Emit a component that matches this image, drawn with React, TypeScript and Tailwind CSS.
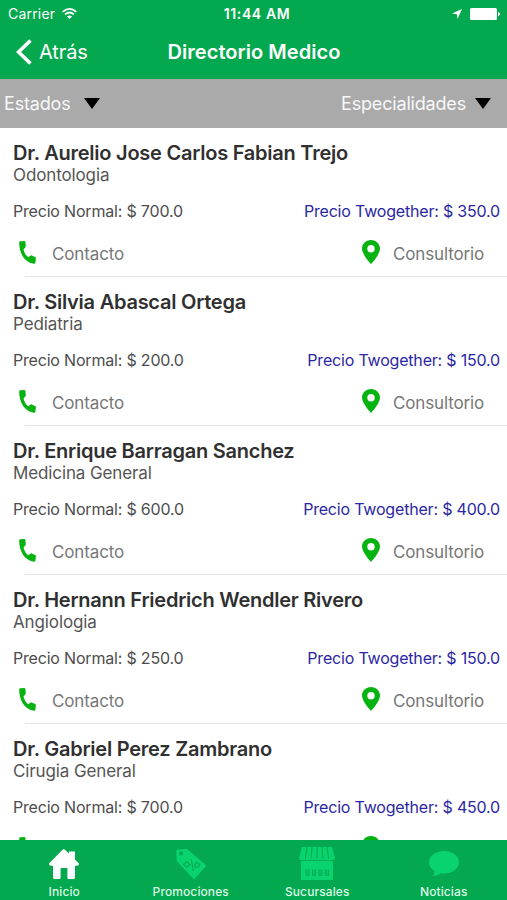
import type { ReactNode } from "react";

type Doctor = {
  name: string;
  specialty: string;
  price: string;
  twogether: string;
};

const doctors: Doctor[] = [
  {
    name: "Dr. Aurelio Jose Carlos Fabian Trejo",
    specialty: "Odontologia",
    price: "700.0",
    twogether: "350.0",
  },
  {
    name: "Dr. Silvia Abascal Ortega",
    specialty: "Pediatria",
    price: "200.0",
    twogether: "150.0",
  },
  {
    name: "Dr. Enrique Barragan Sanchez",
    specialty: "Medicina General",
    price: "600.0",
    twogether: "400.0",
  },
  {
    name: "Dr. Hernann Friedrich Wendler Rivero",
    specialty: "Angiologia",
    price: "250.0",
    twogether: "150.0",
  },
  {
    name: "Dr. Gabriel Perez Zambrano",
    specialty: "Cirugia General",
    price: "700.0",
    twogether: "450.0",
  },
];

function PhoneIcon() {
  return (
    <svg
      className="mt-px w-[17px] h-[23px] shrink-0"
      viewBox="0 0 17 23"
      fill="#06b311"
    >
      <path d="M1.2 0.2 5.3 0Q6.3 0 6.4 1L6.8 5Q6.8 5.8 6.2 6.4L4.5 8.4C5.2 11.6 7 14.6 9.4 16.3L11.3 14.7Q12 14.1 12.8 14.5L16.2 16.1Q17 16.5 16.9 17.3L16.4 21.7Q16.2 22.9 15 22.8C6 21.5 0 13 0.2 1.3Q0.3 0.3 1.2 0.2Z" />
    </svg>
  );
}

function PinIcon() {
  return (
    <svg
      className="w-[18px] h-[24px] shrink-0"
      viewBox="0 0 18 24"
      fill="#06b311"
      fillRule="evenodd"
    >
      <path d="M9 0C4 0 0 3.8 0 8.6C0 14.8 9 24 9 24S18 14.8 18 8.6C18 3.8 14 0 9 0ZM9 5A3.7 3.7 0 1 1 9 12.4A3.7 3.7 0 1 1 9 5Z" />
    </svg>
  );
}

function Caret() {
  return (
    <svg className="w-4 h-[11px] shrink-0" viewBox="0 0 16 11">
      <path d="M0 0H16L8 11Z" />
    </svg>
  );
}

function HomeIcon() {
  return (
    <svg className="w-[30px] h-[30px]" viewBox="0 0 30 30" fill="#fff">
      <path d="M15 0 20 4.6V2.6H26V10.4L30 14.4Q30.2 16.5 28 16.8H26V28.6Q26 30 24.6 30H19.5Q18.4 30 18.4 28.8V19H11.6V28.8Q11.6 30 10.4 30H5.4Q4 30 4 28.6V16.8H2Q-0.2 16.5 0 14.4L13.6 0.7Q14.3 0 15 0Z" />
    </svg>
  );
}

function TagIcon() {
  return (
    <svg className="w-[30px] h-[30px]" viewBox="0 0 30 30">
      <path
        d="M2.2 0.4 10 0Q11.2 0 12 0.7L29.2 15.5Q30.4 16.6 29.4 17.8L19.3 29.2Q18.1 30.5 16.9 29.3L1.3 12.8Q0.6 12 0.6 11L0.3 2.4Q0.3 0.5 2.2 0.4Z"
        fill="#08d36c"
      />
      <circle cx="5" cy="4.5" r="2" fill="#04a84e" />
      <g fill="none" stroke="#04a84e" strokeWidth="1.1">
        <path d="M7.5 15.5 11 12.8 13.8 15.7 10.5 18.3ZM15.3 10.5 17.3 22" />
        <path d="M18.5 16 21 13.2 23.8 15.6 22.3 18 19.3 18.2Z" />
      </g>
    </svg>
  );
}

function StoreIcon() {
  return (
    <svg className="w-9 h-[33px]" viewBox="0 0 36 33">
      <path d="M2 12H34V33H2V12Z" fill="#08d36c" />
      <path d="M3 0H33L36 11Q36 13 34 13H2Q0 13 0 11Z" fill="#08d36c" />
      <path
        d="M8 0 6.4 12M13 0 12 12M18 0V12M23 0 24 12M28 0 29.6 12M2 13.5H34"
        stroke="#04ae53"
        strokeWidth="1.1"
      />
      <path
        d="M7 22.5V28.5H10V22.5M13.5 22.5V28.5H16.5V22.5M20 22.5V28.5H23V22.5M26.5 22.5V28.5H29.5V22.5"
        fill="#06c262"
        stroke="#04ae53"
        strokeWidth="1"
      />
    </svg>
  );
}

function ChatIcon() {
  return (
    <svg className="w-[30px] h-[26px]" viewBox="0 0 30 26" fill="#08d36c">
      <path d="M15 0C6.7 0 0 5 0 11.2C0 15 2.3 18.3 5.8 20.3Q5.5 23 3.6 25C7 25 9.7 24 11.5 22.2Q13.2 22.5 15 22.5C23.3 22.5 30 17.5 30 11.2S23.3 0 15 0Z" />
    </svg>
  );
}

function DoctorRow({ doctor }: { doctor: Doctor }) {
  return (
    <li className="h-[149px] shrink-0 flex flex-col pt-[13px]">
      <h2 className="pl-[13px] text-[20px] leading-6 font-semibold tracking-[-0.24px] text-[#303030]">
        {doctor.name}
      </h2>
      <p className="pl-[13px] text-[17px] leading-5 tracking-[-0.12px] text-[#555]">
        {doctor.specialty}
      </p>
      <div className="mt-4 pl-[13px] pr-[7px] flex justify-between text-[16px] leading-5 tracking-[-0.19px]">
        <span className="text-[#4d4d4d]">Precio Normal: $ {doctor.price}</span>
        <span className="text-[#2b27a3]">
          Precio Twogether: $ {doctor.twogether}
        </span>
      </div>
      <div className="mt-[19px] pl-[19px] pr-[23px] flex justify-between text-[17px] leading-6 tracking-[-0.14px] text-[#777]">
        <div className="flex items-start gap-4">
          <PhoneIcon />
          <span className="pt-0.5">Contacto</span>
        </div>
        <div className="flex items-start gap-[13px]">
          <PinIcon />
          <span className="pt-0.5">Consultorio</span>
        </div>
      </div>
      <div className="mt-auto ml-[25px] h-px bg-[#e4e4e6]" />
    </li>
  );
}

function Tab({ label, children }: { label: string; children: ReactNode }) {
  return (
    <div className="flex-1 flex flex-col items-center">
      <div className="h-[43px] pt-1 flex items-center">{children}</div>
      <span className="text-[12px] leading-[17px] font-medium tracking-[0.1px] text-[#d9f8e6]">
        {label}
      </span>
    </div>
  );
}

export default function App() {
  return (
    <div className="flex h-[900px] w-[507px] flex-col overflow-hidden bg-white font-[Inter,sans-serif]">
      {/* Header */}
      <header className="h-[79px] shrink-0 bg-[#04a84e] text-white">
        <div className="h-[27px] pl-2 pr-[7px] grid grid-cols-[1fr_auto_1fr] items-center text-[14px]">
          <div className="flex items-center gap-[7px]">
            <span className="tracking-[0.2px]">Carrier</span>
            <svg className="w-[15px] h-[11px]" viewBox="0 0 15 11">
              <g fill="none" stroke="#fff" strokeWidth="1.7">
                <path d="M0.6 3.8Q7.5 -2 14.4 3.8" />
                <path d="M3 6.4Q7.5 2.6 12 6.4" />
              </g>
              <path d="M5 8.4Q7.5 6.5 10 8.4L7.5 11Z" fill="#fff" />
            </svg>
          </div>
          <span className="pl-1.5 text-center font-semibold tracking-[0.6px]">
            11:44 AM
          </span>
          <div className="flex items-center justify-end gap-2">
            <svg className="w-[10px] h-[10px]" viewBox="0 0 10 10" fill="#fff">
              <path d="M10 0 5.5 10 4.8 5.3 0 4.6Z" />
            </svg>
            <svg className="w-[30px] h-3" viewBox="0 0 30 12" fill="#fff">
              <rect width="27" height="12" rx="1.5" />
              <path d="M28 4Q30 4.5 30 6T28 8Z" />
            </svg>
          </div>
        </div>
        <div className="h-[50px] pl-4 pr-[15px] grid grid-cols-[1fr_auto_1fr] items-center">
          <div className="flex items-center gap-[7px]">
            <svg className="w-4 h-[26px]" viewBox="0 0 16 26">
              <path
                d="M14.5 1.5 2.5 13 14.5 24.5"
                fill="none"
                stroke="#fff"
                strokeWidth="3.6"
              />
            </svg>
            <span className="text-[20px] tracking-[-0.1px]">Atrás</span>
          </div>
          <h1 className="text-[20px] font-semibold tracking-[0.05px]">
            Directorio Medico
          </h1>
        </div>
      </header>

      {/* Filters */}
      <div className="h-[49px] shrink-0 pl-[4px] pr-4 flex items-center justify-between bg-[#aaa] text-[18px] tracking-[-0.18px] text-[#f7f7f7]">
        <div className="flex items-center gap-[14px]">
          <span>Estados</span>
          <Caret />
        </div>
        <div className="flex items-center gap-[9px]">
          <span>Especialidades</span>
          <Caret />
        </div>
      </div>

      {/* Doctors */}
      <ul className="flex-1 min-h-0 overflow-hidden flex flex-col">
        {doctors.map((doctor) => (
          <DoctorRow key={doctor.name} doctor={doctor} />
        ))}
      </ul>

      {/* Tab bar */}
      <nav className="h-[60px] shrink-0 pl-px flex bg-[#04a84e]">
        <Tab label="Inicio">
          <HomeIcon />
        </Tab>
        <Tab label="Promociones">
          <TagIcon />
        </Tab>
        <Tab label="Sucursales">
          <StoreIcon />
        </Tab>
        <Tab label="Noticias">
          <ChatIcon />
        </Tab>
      </nav>
    </div>
  );
}
